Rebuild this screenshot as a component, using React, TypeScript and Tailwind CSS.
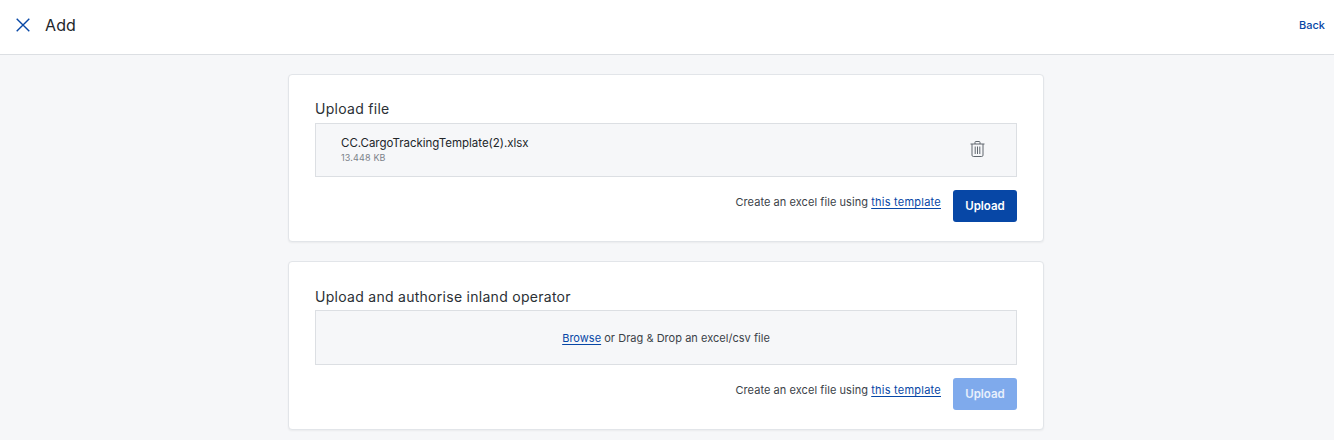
function TemplateRow({ disabled = false }: { disabled?: boolean }) {
    return (
        <div className="mt-[13px] flex justify-end">
            <p className="mt-[4px] text-[11px] leading-[16px] tracking-[0.06px] text-[#3b4248]">
                Create an excel file using{" "}
                <a className="tracking-[0.24px] text-[#0747a6] underline underline-offset-2">this template</a>
            </p>
            <button
                className={`ml-[12px] h-[32px] w-[64px] rounded-[3px] pt-[1px] text-[11.5px] font-semibold ${
                    disabled ? "bg-[#7faaec] text-[#e8f0fc]" : "bg-[#0747a6] text-white"
                }`}
            >
                Upload
            </button>
        </div>
    );
}

export default function App() {
    return (
        <div className="h-[440px] overflow-hidden bg-[#f6f7f9] font-['Inter',sans-serif]">
            <header className="flex h-[55px] items-start justify-between border-b border-[#dcdfe3] bg-white pr-[9px] pl-[16px]">
                <div className="flex items-center pt-[15px]">
                    <svg className="h-[14px] w-[14px] text-[#0747a6]" viewBox="0 0 14 14" fill="none" stroke="currentColor" strokeWidth="1.4">
                        <path d="M0.7 0.7L13.3 13.3M13.3 0.7L0.7 13.3" />
                    </svg>
                    <h1 className="ml-[15px] text-[16px] leading-[20px] tracking-[0.1px] text-[#22262a]">Add</h1>
                </div>
                <a className="pt-[18px] text-[11px] leading-[14px] font-medium text-[#0747a6]">Back</a>
            </header>

            <main className="mx-auto mt-[19px] flex w-[756px] -translate-x-[1px] flex-col gap-[19px]">
                <section className="h-[168px] rounded-[4px] border border-[#e2e5e9] bg-white px-[26px] pt-[25px] shadow-[0_1px_2px_rgba(0,0,0,0.05)]">
                    <h2 className="text-[14px] leading-[18px] tracking-[0.28px] text-[#2b3035]">Upload file</h2>
                    <div className="mt-[5px] flex h-[54px] items-center justify-between border border-[#dcdfe3] bg-[#f6f7f9] pr-[31px] pl-[25px]">
                        <div>
                            <p className="text-[11.5px] leading-[15px] tracking-[-0.02px] text-[#22262a]">CC.CargoTrackingTemplate(2).xlsx</p>
                            <p className="mt-[1px] text-[9px] leading-[12px] tracking-[0.15px] text-[#7b8289]">13.448 KB</p>
                        </div>
                        <svg className="mb-[2px] h-[16px] w-[15px] text-[#60676e]" viewBox="0 0 15 16" fill="none" stroke="currentColor" strokeWidth="1">
                            <path d="M0.5 3h14M5 3V1.3c0-.5.3-.8.8-.8h3.4c.5 0 .8.3.8.8V3M2 3v11.2c0 .8.5 1.3 1.3 1.3h8.4c.8 0 1.3-.5 1.3-1.3V3M5.2 5.5v7.5M7.5 5.5v7.5M9.8 5.5v7.5" />
                        </svg>
                    </div>
                    <TemplateRow />
                </section>

                <section className="h-[169px] rounded-[4px] border border-[#e2e5e9] bg-white px-[26px] pt-[26px] shadow-[0_1px_2px_rgba(0,0,0,0.05)]">
                    <h2 className="text-[14px] leading-[18px] tracking-[0.28px] text-[#2b3035]">Upload and authorise inland operator</h2>
                    <div className="mt-[4px] flex h-[55px] items-center justify-center border border-[#dcdfe3] bg-[#f6f7f9] pt-[1px] text-[11px] tracking-[0.03px] text-[#3b4248]">
                        <p>
                            <a className="text-[#0747a6] underline underline-offset-2">Browse</a> or Drag &amp; Drop an excel/csv file
                        </p>
                    </div>
                    <TemplateRow disabled />
                </section>
            </main>
        </div>
    );
}
